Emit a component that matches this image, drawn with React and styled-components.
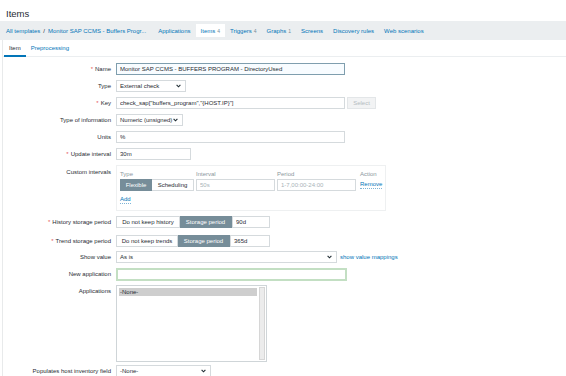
import React from 'react';
import styled, { createGlobalStyle } from 'styled-components';

const Global = createGlobalStyle`
  html, body { margin: 0; padding: 0; background: #fff; }
  body { font-family: "Liberation Sans", Arial, sans-serif; font-size: 6px; color: #1f2c33; }
  * { box-sizing: border-box; }
`;

const Page = styled.div`
  width: 566px;
  height: 376px;
  overflow: hidden;
  background: #fff;
`;

const Title = styled.h1`
  margin: 0;
  padding: 8px 0 0 6px;
  height: 21px;
  font-size: 9.5px;
  line-height: 12px;
  font-weight: normal;
  color: #1f2c33;
`;

const NavBar = styled.nav`
  display: flex;
  align-items: center;
  height: 19px;
  padding-left: 6px;
  background: #ebeef0;
`;

const Link = styled.a`
  color: #0275b8;
  text-decoration: none;
  white-space: nowrap;
`;

const Sep = styled.span`
  margin: 0 3px;
  color: #1f2c33;
`;

const NavItem = styled.a`
  display: flex;
  align-items: center;
  height: 13px;
  padding: 0 5px;
  margin-left: ${(p) => (p.$first ? '7px' : '0')};
  color: #0275b8;
  white-space: nowrap;
  background: ${(p) => (p.$active ? '#fff' : 'transparent')};
`;

const Count = styled.span`
  margin-left: 2px;
  font-size: 5px;
  color: #768d99;
`;

const Frame = styled.div`
  margin-left: 2px;
  border-left: 1px solid #e8eaeb;
  height: 100%;
`;

const TabRow = styled.div`
  display: flex;
  height: 17px;
  padding-left: 1px;
  border-bottom: 1px solid #ebeef0;
`;

const Tab = styled.a`
  display: flex;
  align-items: center;
  padding: 0 5px;
  color: ${(p) => (p.$active ? '#1f2c33' : '#0275b8')};
  border-bottom: 2px solid ${(p) => (p.$active ? '#0275b8' : 'transparent')};
  margin-bottom: -1px;
`;

const Form = styled.div`
  display: flex;
  flex-direction: column;
  gap: 5px;
  padding-top: 6px;
`;

const Row = styled.div`
  display: flex;
  align-items: flex-start;
  margin-top: ${(p) => p.$mt || 0}px;
`;

const Label = styled.div`
  width: 108px;
  margin-right: 5px;
  text-align: right;
  line-height: 12px;
  height: 12px;
  white-space: nowrap;
  padding-top: ${(p) => p.$pt || 0}px;
`;

const Req = styled.span`
  color: #e45959;
  margin-right: 2px;
`;

const Field = styled.div`
  display: flex;
  align-items: center;
`;

const Input = styled.input`
  height: ${(p) => p.$h || 12}px;
  width: ${(p) => p.$w}px;
  padding: 0 3px;
  margin: 0;
  font-family: inherit;
  font-size: 6px;
  color: #1f2c33;
  background: ${(p) => (p.$focus ? '#f8fcff' : '#fff')};
  border: ${(p) =>
    p.$focus ? '1px solid #7f9eae' : p.$green ? '2px solid #c3dfc3' : '1px solid #d5dadd'};
  outline: none;
  &::placeholder { color: #a9b3b8; }
`;

const SelectBox = styled.div`
  display: flex;
  align-items: center;
  justify-content: space-between;
  height: 12px;
  width: ${(p) => p.$w}px;
  padding: 0 4px 0 3px;
  border: 1px solid #d5dadd;
  background: #fff;
  white-space: nowrap;
`;

const Chevron = () => (
  <svg width="5" height="4" viewBox="0 0 5 4">
    <path d="M0.6 0.8 L2.5 2.8 L4.4 0.8" fill="none" stroke="#1f2c33" strokeWidth="1.1" />
  </svg>
);

const Select = ({ w, children }) => (
  <SelectBox $w={w}>
    <span>{children}</span>
    <Chevron />
  </SelectBox>
);

const DisabledButton = styled.div`
  display: flex;
  align-items: center;
  justify-content: center;
  margin-left: 2px;
  width: 29px;
  height: 12px;
  background: #f2f3f4;
  border: 1px solid #e3e6e8;
  color: #b4bcc0;
`;

const Segment = styled.div`
  display: flex;
`;

const SegButton = styled.div`
  display: flex;
  align-items: center;
  justify-content: center;
  width: ${(p) => p.$w}px;
  height: 12px;
  white-space: nowrap;
  border: 1px solid ${(p) => (p.$active ? '#768d99' : '#d5dadd')};
  background: ${(p) => (p.$active ? '#768d99' : '#fff')};
  color: ${(p) => (p.$active ? '#fff' : '#1f2c33')};
  & + & { border-left-width: 0; }
`;

const IntervalsBox = styled.div`
  width: 270px;
  border: 1px solid #eef0f1;
  padding: 3px 3px 5px 3px;
`;

const IntervalsGrid = styled.div`
  display: grid;
  grid-template-columns: 76px 81px 83px auto;
  grid-template-rows: 10px 12px;
  align-items: center;
`;

const Head = styled.div`
  color: #8a979e;
  line-height: 10px;
`;

const ActionLink = styled.a`
  color: #0275b8;
  justify-self: start;
  border-bottom: 1px dotted #7fb4d6;
  line-height: 7px;
`;

const AddLine = styled.div`
  margin-top: 4px;
  height: 10px;
  display: flex;
  align-items: center;
`;

const PlainLink = styled.a`
  color: #0275b8;
  margin-left: 3px;
  white-space: nowrap;
`;

const ListBox = styled.div`
  display: flex;
  width: 151px;
  height: 77px;
  padding: 1px;
  border: 1px solid #cfd5d8;
  background: #fff;
`;

const Options = styled.div`
  flex: 1;
  padding: 1px 2px 1px 1px;
`;

const Option = styled.div`
  height: 8px;
  line-height: 8px;
  padding-left: 1px;
  background: ${(p) => (p.$selected ? '#cecece' : 'transparent')};
`;

const ScrollTrack = styled.div`
  width: 6px;
  background: #ececec;
  border: 1px solid #d6d6d6;
`;

export default function App() {
  return (
    <Page>
      <Global />
      <Title>Items</Title>
      <NavBar>
        <Link>All templates</Link>
        <Sep>/</Sep>
        <Link>Monitor SAP CCMS - Buffers Progr...</Link>
        <NavItem $first>Applications</NavItem>
        <NavItem $active>Items<Count>4</Count></NavItem>
        <NavItem>Triggers<Count>4</Count></NavItem>
        <NavItem>Graphs<Count>1</Count></NavItem>
        <NavItem>Screens</NavItem>
        <NavItem>Discovery rules</NavItem>
        <NavItem>Web scenarios</NavItem>
      </NavBar>
      <Frame>
        <TabRow>
          <Tab $active>Item</Tab>
          <Tab>Preprocessing</Tab>
        </TabRow>
        <Form>
          <Row>
            <Label><Req>*</Req>Name</Label>
            <Field>
              <Input $w={229} $focus readOnly value="Monitor SAP CCMS - BUFFERS PROGRAM - DirectoryUsed" />
            </Field>
          </Row>
          <Row>
            <Label>Type</Label>
            <Select w={70}>External check</Select>
          </Row>
          <Row>
            <Label><Req>*</Req>Key</Label>
            <Field>
              <Input $w={229} readOnly value='check_sap["buffers_program","{HOST.IP}"]' />
              <DisabledButton>Select</DisabledButton>
            </Field>
          </Row>
          <Row>
            <Label>Type of information</Label>
            <Select w={67}>Numeric (unsigned)</Select>
          </Row>
          <Row>
            <Label>Units</Label>
            <Input $w={229} readOnly value="%" />
          </Row>
          <Row>
            <Label><Req>*</Req>Update interval</Label>
            <Input $w={75} readOnly value="30m" />
          </Row>
          <Row>
            <Label $pt={1}>Custom intervals</Label>
            <IntervalsBox>
              <IntervalsGrid>
                <Head>Type</Head>
                <Head>Interval</Head>
                <Head>Period</Head>
                <Head>Action</Head>
                <Segment>
                  <SegButton $w={32} $active>Flexible</SegButton>
                  <SegButton $w={42}>Scheduling</SegButton>
                </Segment>
                <Input $w={79} readOnly placeholder="50s" />
                <Input $w={79} readOnly placeholder="1-7,00:00-24:00" />
                <ActionLink>Remove</ActionLink>
              </IntervalsGrid>
              <AddLine>
                <ActionLink>Add</ActionLink>
              </AddLine>
            </IntervalsBox>
          </Row>
          <Row>
            <Label><Req>*</Req>History storage period</Label>
            <Field>
              <Segment>
                <SegButton $w={64}>Do not keep history</SegButton>
                <SegButton $w={52} $active>Storage period</SegButton>
              </Segment>
              <Input $w={38} readOnly value="90d" />
            </Field>
          </Row>
          <Row $mt={2}>
            <Label><Req>*</Req>Trend storage period</Label>
            <Field>
              <Segment>
                <SegButton $w={62}>Do not keep trends</SegButton>
                <SegButton $w={52} $active>Storage period</SegButton>
              </Segment>
              <Input $w={40} readOnly value="365d" />
            </Field>
          </Row>
          <Row $mt={-1}>
            <Label>Show value</Label>
            <Field>
              <Select w={221}>As is</Select>
              <PlainLink>show value mappings</PlainLink>
            </Field>
          </Row>
          <Row>
            <Label>New application</Label>
            <Input $w={231} $h={13} $green readOnly value="" />
          </Row>
          <Row $mt={-1}>
            <Label>Applications</Label>
            <ListBox>
              <Options>
                <Option $selected>-None-</Option>
              </Options>
              <ScrollTrack />
            </ListBox>
          </Row>
          <Row $mt={-2}>
            <Label>Populates host inventory field</Label>
            <Select w={95}>-None-</Select>
          </Row>
        </Form>
      </Frame>
    </Page>
  );
}
